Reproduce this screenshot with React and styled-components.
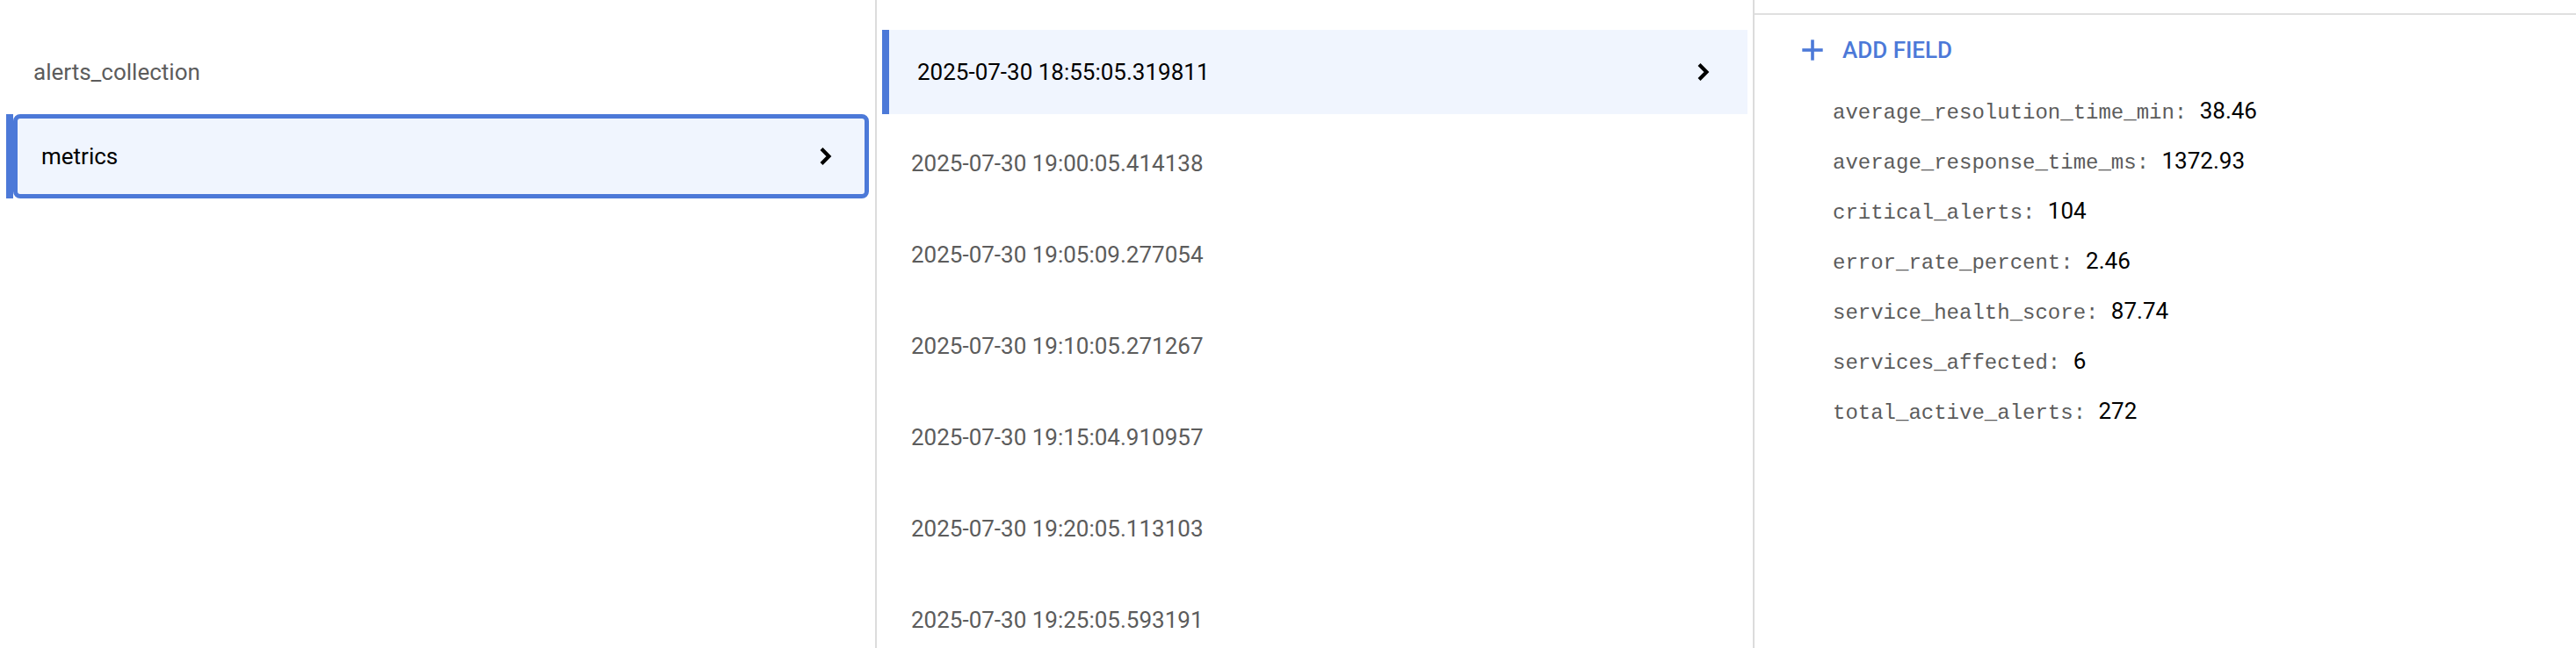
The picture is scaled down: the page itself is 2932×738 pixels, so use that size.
import React from "react"
import styled, {createGlobalStyle, css} from "styled-components"

// Styles
const GlobalStyles = createGlobalStyle`
  html, body {
    margin: 0;
    padding: 0;
    background: #ffffff;
  }

  body {
    font-family: Roboto, "Noto Sans", Arial, sans-serif;
    -webkit-font-smoothing: antialiased;
  }
`

const BLUE = "#4c79d8"
const GREY = "#5c5c5c"
const SELECTED_BG = "#f0f5fe"
const RULE = "#dcdcdc"

const collections = ["alerts_collection", "metrics"]
const selectedCollection = "metrics"

const documents = [
    "2025-07-30 18:55:05.319811",
    "2025-07-30 19:00:05.414138",
    "2025-07-30 19:05:09.277054",
    "2025-07-30 19:10:05.271267",
    "2025-07-30 19:15:04.910957",
    "2025-07-30 19:20:05.113103",
    "2025-07-30 19:25:05.593191",
]
const selectedDocument = documents[0]

const fields = [
    ["average_resolution_time_min", "38.46"],
    ["average_response_time_ms", "1372.93"],
    ["critical_alerts", "104"],
    ["error_rate_percent", "2.46"],
    ["service_health_score", "87.74"],
    ["services_affected", "6"],
    ["total_active_alerts", "272"],
]

const Chevron = () => (
    <ChevronSvg viewBox="0 0 16 24" aria-hidden="true">
        <polyline points="3,3.6 11.4,12 3,20.4" fill="none" stroke="#000" strokeWidth="4.2"/>
    </ChevronSvg>
)

const PlusIcon = () => (
    <PlusSvg viewBox="0 0 40 40" aria-hidden="true">
        <rect x="18.2" y="8.3" width="3.6" height="23.4" fill={BLUE}/>
        <rect x="8.3" y="18.2" width="23.4" height="3.6" fill={BLUE}/>
    </PlusSvg>
)

// Component - App
const App = () => {
    return <>
        <GlobalStyles/>
        <Page>
            <Column $divider>
                <CollectionList>
                    {collections.map(name =>
                        name === selectedCollection ? (
                            <SelectedCollection key={name}>
                                <ActiveBar/>
                                <FocusBox>
                                    <ItemLabel $active>{name}</ItemLabel>
                                    <Chevron/>
                                </FocusBox>
                            </SelectedCollection>
                        ) : (
                            <CollectionItem key={name}>
                                <ItemLabel>{name}</ItemLabel>
                            </CollectionItem>
                        )
                    )}
                </CollectionList>
            </Column>

            <Column $divider>
                <DocumentList>
                    {documents.map(id =>
                        <DocumentItem key={id} $selected={id === selectedDocument}>
                            <ItemLabel $active={id === selectedDocument}>{id}</ItemLabel>
                            {id === selectedDocument && <Chevron/>}
                        </DocumentItem>
                    )}
                </DocumentList>
            </Column>

            <Column>
                <TopRule/>
                <AddFieldButton type="button">
                    <PlusIcon/>
                    ADD FIELD
                </AddFieldButton>
                <FieldList>
                    {fields.map(([key, value]) =>
                        <FieldRow key={key}>
                            <FieldKey>{`${key}: `}</FieldKey>
                            <FieldValue>{value}</FieldValue>
                        </FieldRow>
                    )}
                </FieldList>
            </Column>
        </Page>
    </>
}

export default App

// Layout
const Page = styled.div`
  display: grid;
  grid-template-columns: 998px 999px 1fr;
  height: 738px;
  overflow: hidden;
`

const Column = styled.section`
  box-sizing: border-box;
  min-width: 0;
  height: 100%;
  overflow: hidden;
  ${p => p.$divider && css`
    border-right: 2px solid ${RULE};
  `}
`

const ItemLabel = styled.span`
  font-size: 26px;
  color: ${p => (p.$active ? "#000000" : GREY)};
  white-space: nowrap;
`

const ChevronSvg = styled.svg`
  width: 16px;
  height: 24px;
  flex: none;
`

// Collections
const CollectionList = styled.div`
  display: flex;
  flex-direction: column;
  padding-top: 34px;
`

const CollectionItem = styled.div`
  display: flex;
  align-items: center;
  height: 96px;
  padding-left: 38px;
`

const SelectedCollection = styled.div`
  display: flex;
  height: 96px;
  padding: 0 7px;
`

const ActiveBar = styled.div`
  width: 8px;
  flex: none;
  background: ${BLUE};
`

const FocusBox = styled.div`
  flex: 1;
  display: flex;
  align-items: center;
  justify-content: space-between;
  box-sizing: border-box;
  border: 5px solid ${BLUE};
  border-radius: 8px;
  background: ${SELECTED_BG};
  padding: 0 36px 0 27px;
`

// Documents
const DocumentList = styled.div`
  display: flex;
  flex-direction: column;
  gap: 8px;
  padding-top: 34px;
`

const DocumentItem = styled.div`
  display: flex;
  align-items: center;
  justify-content: space-between;
  flex: none;
  height: 96px;
  box-sizing: border-box;
  padding-left: 39px;

  ${p => p.$selected && css`
    margin: 0 6px;
    border-left: 8px solid ${BLUE};
    background: ${SELECTED_BG};
    padding: 0 42px 0 32px;
  `}
`

// Fields
const TopRule = styled.div`
  height: 15px;
  border-bottom: 2px solid #e0e0e0;
`

const AddFieldButton = styled.button`
  display: flex;
  align-items: center;
  gap: 14px;
  height: 48px;
  margin-top: 16px;
  padding: 0 0 0 46px;
  border: none;
  background: none;
  color: ${BLUE};
  font-family: Roboto, "Noto Sans", Arial, sans-serif;
  font-size: 26px;
  font-weight: 500;
  cursor: pointer;
`

const PlusSvg = styled.svg`
  width: 40px;
  height: 40px;
  flex: none;
`

const FieldList = styled.div`
  display: flex;
  flex-direction: column;
  margin-top: 17px;
  padding-left: 89px;
`

const FieldRow = styled.div`
  height: 57px;
  line-height: 57px;
  white-space: pre;
`

const FieldKey = styled.span`
  font-family: "Liberation Mono", "DejaVu Sans Mono", monospace;
  font-size: 24px;
  color: ${GREY};
`

const FieldValue = styled.span`
  font-size: 26px;
  color: #000000;
`
